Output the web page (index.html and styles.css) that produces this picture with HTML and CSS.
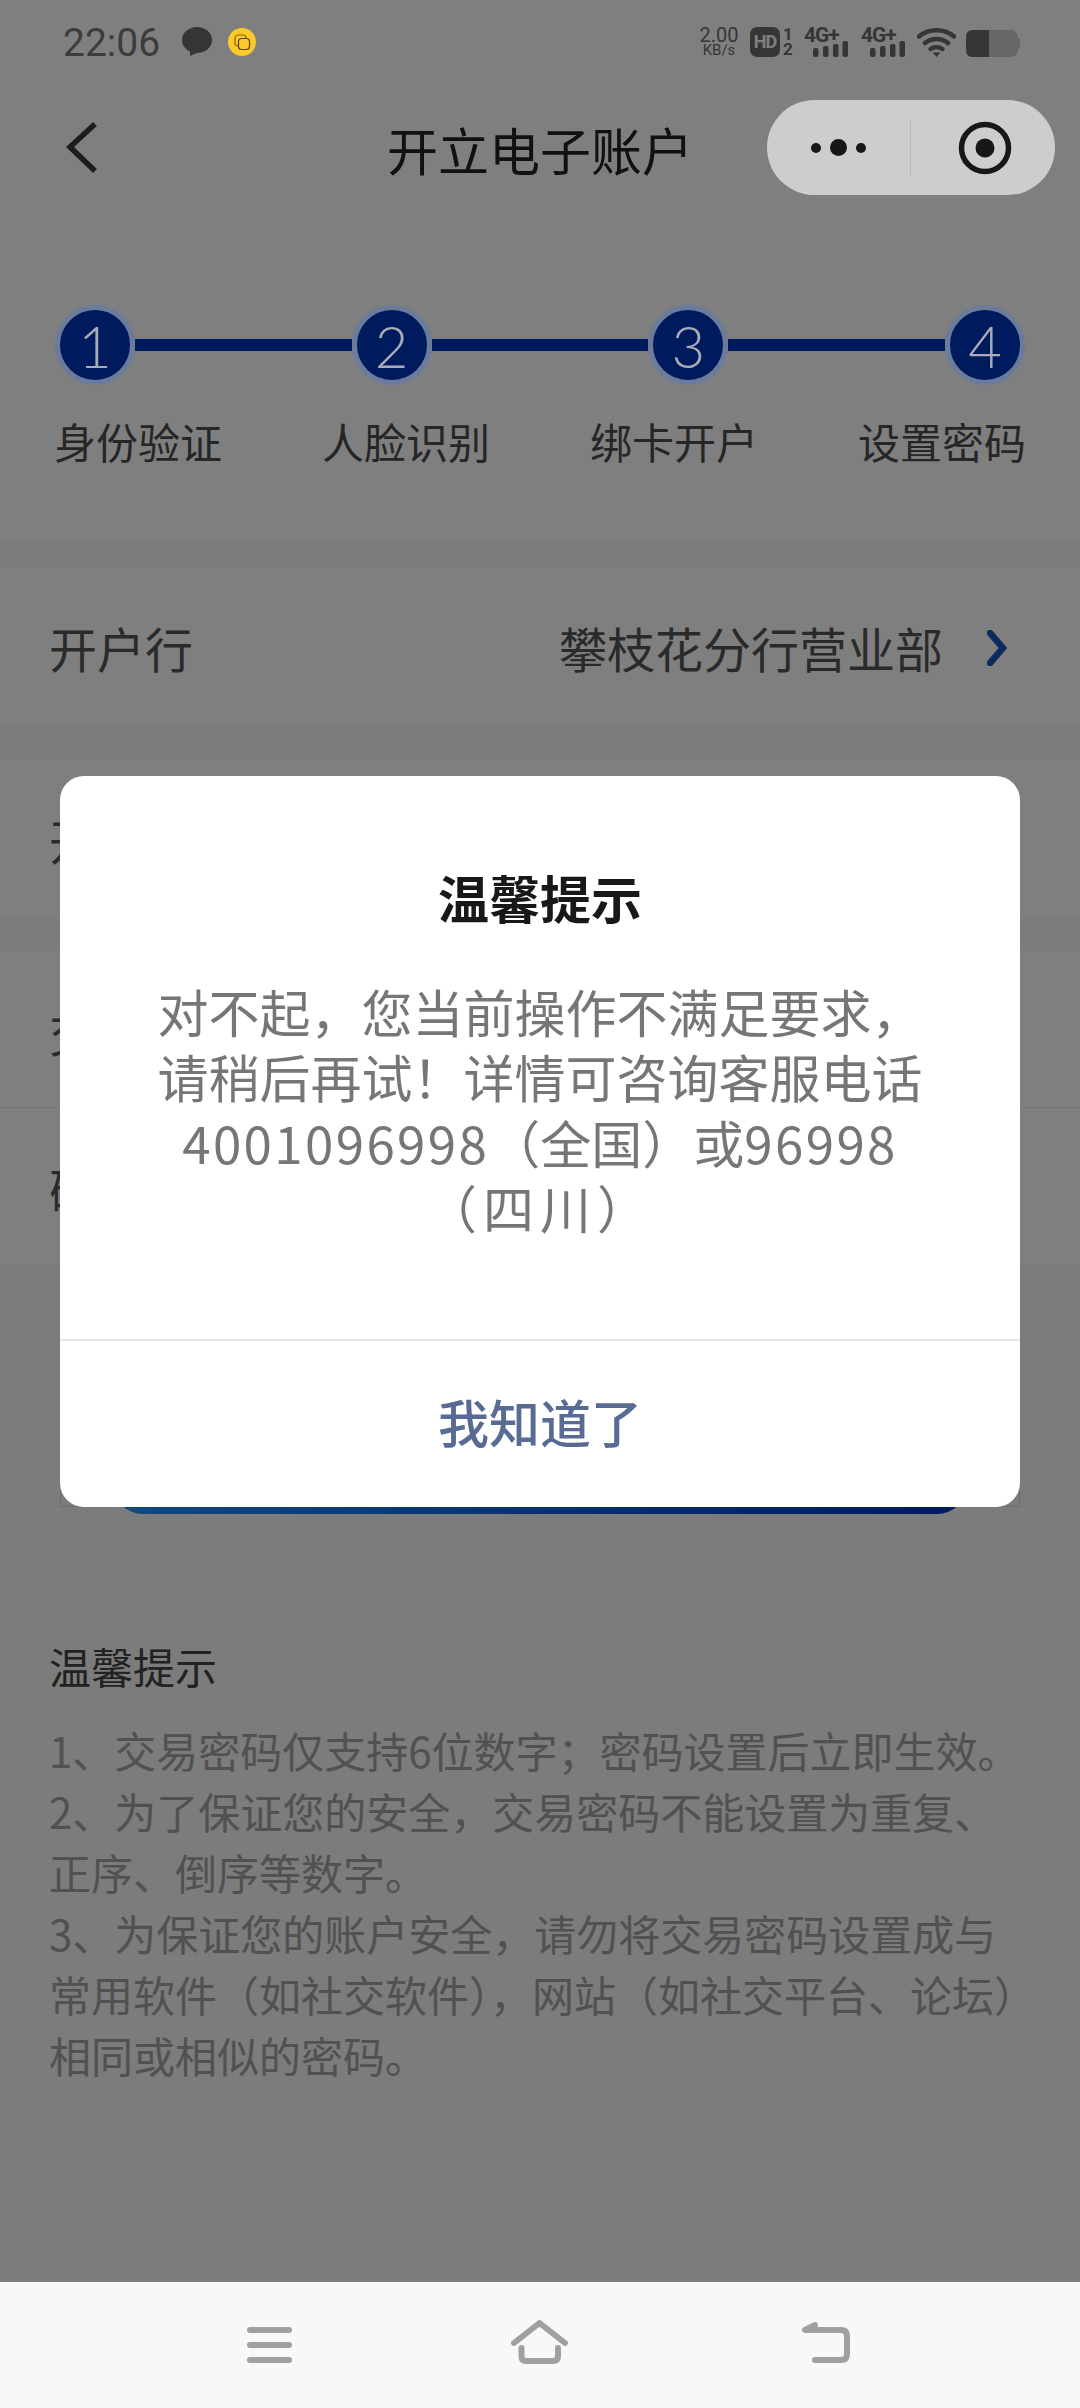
FILE: index.html
```html
<!DOCTYPE html>
<html lang="zh-CN">
    <head>
        <title>开立电子账户</title>
        <link rel="stylesheet" href="styles.css">
    </head>
    <body>
        <div id="screen">
            <div class="status-bar">
                <div class="status-left">
                    <span class="clock">22:06</span>
                    <svg class="bubble" width="30" height="29" viewBox="0 0 30 29"><ellipse cx="15" cy="13" rx="15" ry="13" fill="#6c6c6c"/><path d="M8 22 L8 29 L17 25 Z" fill="#6c6c6c"/></svg>
                    <svg class="over-mask" width="28" height="28" viewBox="0 0 28 28"><circle cx="14" cy="14" r="14" fill="#fcc92b"/><rect x="7" y="7" width="11" height="11" rx="3" fill="none" stroke="#8a6512" stroke-width="1.2"/><rect x="10.500" y="10.500" width="11" height="11" rx="3" fill="#fcc92b" stroke="#5b4208" stroke-width="1.200"/></svg>
                </div>
                <div class="status-right">
                    <div class="speed"><span>2.00</span><span class="speed-unit">KB/s</span></div>
                    <div class="hd">HD</div>
                    <div class="sim"><span>1</span><span>2</span></div>
                    <div class="signal">
                        <span>4G+</span>
                        <svg width="35" height="16" viewBox="0 0 35 16"><rect x="0" y="7" width="5.500" height="9" rx="2"/><rect x="10" y="5" width="5.500" height="11" rx="2"/><rect x="20" y="3" width="5.500" height="13" rx="2"/><rect x="29.500" y="0" width="5.500" height="16" rx="2"/></svg>
                    </div>
                    <div class="signal">
                        <span>4G+</span>
                        <svg width="35" height="16" viewBox="0 0 35 16"><rect x="0" y="7" width="5.500" height="9" rx="2"/><rect x="10" y="5" width="5.500" height="11" rx="2"/><rect x="20" y="3" width="5.500" height="13" rx="2"/><rect x="29.500" y="0" width="5.500" height="16" rx="2"/></svg>
                    </div>
                    <svg class="wifi" width="39" height="30" viewBox="0 0 39 30" fill="none" stroke="#6c6c6c" stroke-width="4.500" stroke-linecap="round"><path d="M2 9.500 C11 1 28 1 37 9.500"/><path d="M8 16 C14 10.500 25 10.500 31 16"/><path d="M13.500 22 C17 19.500 22 19.500 25.500 22"/><path d="M15.500 25.500 H23.500 L19.500 30 Z" fill="#6c6c6c" stroke="none"/></svg>
                    <svg class="battery" width="54" height="27" viewBox="0 0 54 27"><rect width="52" height="27" rx="7" fill="#cecece"/><rect x="52" y="8" width="2" height="11" rx="1" fill="#cecece"/><path d="M7 0 H23 V27 H7 Q0 27 0 20 V7 Q0 0 7 0 Z" fill="#6c6c6c"/></svg>
                </div>
            </div>

            <div class="header">
                <svg class="back" width="34" height="54" viewBox="0 0 34 54" fill="none" stroke="#3a3a3a" stroke-width="5.500"><path d="M30 3 L5 26 L30 50"/></svg>
                <h1 class="page-title">开立电子账户</h1>
            </div>

            <div class="capsule">
                <div class="capsule-more"><i></i><i class="big"></i><i></i></div>
                <div class="capsule-line"></div>
                <svg width="56" height="56" viewBox="0 0 56 56"><circle cx="28" cy="28" r="23.500" fill="none" stroke="#171717" stroke-width="5.500"/><circle cx="28" cy="28" r="9.500" fill="#171717"/></svg>
            </div>

            <div class="steps">
                <div class="step-track">
                    <div class="step-dot">1</div>
                    <div class="step-line"></div>
                    <div class="step-dot">2</div>
                    <div class="step-line"></div>
                    <div class="step-dot">3</div>
                    <div class="step-line"></div>
                    <div class="step-dot">4</div>
                </div>
                <div class="step-labels">
                    <span>身份验证</span>
                    <span>人脸识别</span>
                    <span>绑卡开户</span>
                    <span>设置密码</span>
                </div>
            </div>

            <div class="form-group first">
                <div class="form-row">
                    <span>开户行</span>
                    <span class="row-value">攀枝花分行营业部
                        <svg width="20" height="36" viewBox="0 0 20 36" fill="none" stroke="#1a54c0" stroke-width="6.500" stroke-linecap="round"><path d="M3 3 L16 18 L3 33"/></svg>
                    </span>
                </div>
            </div>
            <div class="form-group">
                <div class="form-row"><span>开户名称</span></div>
            </div>
            <div class="form-group">
                <div class="form-row"><span>交易密码</span></div>
                <div class="form-row divided"><span>确认密码</span></div>
            </div>

            <div class="submit"></div>

            <div class="tips">
                <h2>温馨提示</h2>
                <p>1、交易密码仅支持6位数字；密码设置后立即生效。</p>
                <p>2、为了保证您的安全，交易密码不能设置为重复、正序、倒序等数字。</p>
                <p>3、为保证您的账户安全，请勿将交易密码设置成与常用软件（如社交软件），网站（如社交平台、论坛）相同或相似的密码。</p>
            </div>

            <div class="mask">
                <div class="dialog">
                    <h3 class="dialog-title">温馨提示</h3>
                    <p class="dialog-text">对不起，您当前操作不满足要求，请稍后再试！详情可咨询客服电话<span class="num">4001096998</span>（全国）或<span class="num">96998</span><span class="region">（四川）</span></p>
                    <div class="dialog-btn">我知道了</div>
                </div>
            </div>
        </div>

        <div class="nav-bar">
            <svg width="45" height="36" viewBox="0 0 45 36" fill="#a0a0a0"><rect width="45" height="6" rx="3"/><rect y="15" width="45" height="6" rx="3"/><rect y="30" width="45" height="6" rx="3"/></svg>
            <svg class="nav-home" width="57" height="44" viewBox="0 0 57 44" fill="none" stroke="#a0a0a0" stroke-width="6" stroke-linecap="round" stroke-linejoin="round"><path d="M3 23 L28.500 3 L54 23"/><path d="M10.500 28 V36 Q10.500 41 15 41 H42 Q47 41 47 36 V28"/></svg>
            <svg class="nav-back" width="50" height="42" viewBox="0 0 50 42" fill="none" stroke="#a0a0a0" stroke-width="6" stroke-linecap="round" stroke-linejoin="round"><path d="M14 3 L4 8 H40 Q46 8 46 14 V32 Q46 38 40 38 H14"/></svg>
        </div>
    </body>
</html>
```

FILE: styles.css
```css
* {
    box-sizing: border-box;
}

body {
    margin: 0;
    width: 1080px;
    height: 2408px;
    overflow: hidden;
    background-color: #F7F8F7;
    font-family: "Noto Sans CJK SC", sans-serif;
}

h1, h2, h3, p {
    margin: 0;
    font-weight: normal;
}

#screen {
    position: relative;
    height: 2282px;
}

.mask {
    position: absolute;
    top: 0;
    right: 0;
    bottom: 0;
    left: 0;
    z-index: 10;
    display: flex;
    align-items: center;
    justify-content: center;
    background-color: rgba(0, 0, 0, 0.5);
}

/* status bar */
.status-bar {
    display: flex;
    justify-content: space-between;
    height: 100px;
    padding: 27px 60px 0 63px;
    background-color: #FFF;
}
.status-left {
    display: flex;
    align-items: flex-start;
}
.clock {
    font-family: Roboto, sans-serif;
    font-size: 39px;
    line-height: 32px;
    color: #787878;
}
.bubble {
    margin-left: 22px;
}
.over-mask {
    position: relative;
    z-index: 11;
    margin-left: 16px;
    margin-top: 1px;
}
.status-right {
    display: flex;
    align-items: flex-start;
    color: #6c6c6c;
    font-family: Roboto, sans-serif;
}
.speed {
    display: flex;
    flex-direction: column;
    align-items: center;
    width: 38px;
    font-size: 20px;
    line-height: 17px;
}
.speed-unit {
    font-size: 15px;
    line-height: 13px;
}
.hd {
    width: 30px;
    height: 30px;
    margin-left: 12px;
    border-radius: 7px;
    background-color: #6c6c6c;
    color: #FFF;
    font-size: 18px;
    font-weight: bold;
    letter-spacing: -1px;
    line-height: 30px;
    text-align: center;
}
.sim {
    display: flex;
    flex-direction: column;
    align-items: center;
    width: 12px;
    margin-left: 2px;
    font-size: 17px;
    font-weight: bold;
    line-height: 15px;
}
.signal {
    display: flex;
    flex-direction: column;
    width: 44px;
    margin-left: 10px;
    font-size: 21px;
    font-weight: bold;
    letter-spacing: -1px;
    line-height: 17px;
}
.signal + .signal {
    margin-left: 13px;
}
.signal svg {
    align-self: flex-end;
    margin-top: -3px;
    fill: #6c6c6c;
}
.wifi {
    margin-left: 12px;
}
.battery {
    margin-top: 3px;
    margin-left: 10px;
}

/* title bar */
.header {
    display: grid;
    grid-template-columns: 1fr auto 1fr;
    align-items: center;
    height: 100px;
    background-color: #FFF;
}
.back {
    margin-left: 65px;
    margin-top: -4px;
}
.page-title {
    margin-top: -3px;
    font-size: 51px;
    line-height: 100px;
    color: #222;
}
.capsule {
    position: absolute;
    top: 100px;
    left: 767px;
    z-index: 11;
    display: flex;
    align-items: center;
    width: 288px;
    height: 95px;
    border-radius: 48px;
    background-color: #CDCDCD;
}
.capsule-more {
    display: flex;
    align-items: center;
    gap: 9px;
    margin-left: 44px;
}
.capsule-more i {
    width: 10px;
    height: 10px;
    border-radius: 50%;
    background-color: #171717;
}
.capsule-more i.big {
    width: 17px;
    height: 17px;
}
.capsule-line {
    width: 1px;
    height: 56px;
    margin: 0 46px 0 44px;
    background-color: #BDBDBD;
}

/* steps */
.steps {
    height: 340px;
    padding-top: 105px;
    background-color: #FFF;
}
.step-track {
    display: flex;
    align-items: center;
    padding: 0 55px;
}
/* the dots sit above the mask, their digit and ring are lighter than it allows */
.step-dot {
    position: relative;
    z-index: 11;
    display: flex;
    align-items: center;
    justify-content: center;
    flex: none;
    width: 80px;
    height: 80px;
    border: 5px solid #6B7B9B;
    border-radius: 50%;
    background-color: #001A5E;
    font-family: Lato, sans-serif;
    font-size: 58px;
    font-weight: 300;
    color: #A8ACB6;
}
.step-line {
    flex: 1;
    height: 12px;
    background-color: #0034BC;
}
.step-labels {
    display: flex;
    justify-content: space-between;
    margin-top: 26px;
    padding: 0 54px;
    font-size: 42px;
    line-height: 60px;
    color: #4C4C4C;
}

/* form rows */
.form-group {
    margin-top: 36px;
    background-color: #FFF;
}
.form-group.first {
    margin-top: 27px;
}
.form-row {
    display: flex;
    justify-content: space-between;
    align-items: center;
    height: 156px;
    padding: 3px 0 0 49px;
    font-size: 48px;
    color: #555;
}
.form-row.divided {
    height: 157px;
    border-top: 1px solid #E8E8E8;
}
.row-value {
    display: flex;
    align-items: center;
    gap: 44px;
    padding-right: 73px;
}
.row-value svg {
    margin-top: 3px;
}

/* submit button, mostly behind the dialog */
.submit {
    width: 854px;
    height: 120px;
    margin: 130px auto 0;
    border-radius: 30px;
    background: linear-gradient(90deg, #1E94FF, #0034BC);
}

/* tips */
.tips {
    margin-top: 121px;
    padding: 0 48px 0 49px;
    font-size: 42px;
    line-height: 61px;
    color: #A2A2A2;
}
.tips h2 {
    margin-bottom: 23px;
    font-size: 42px;
    color: #444;
}

/* dialog */
.dialog {
    position: relative;
    width: 960px;
    border-radius: 24px;
    background-color: #FFF;
    text-align: center;
}
.dialog::before {
    content: "";
    position: absolute;
    right: 0;
    bottom: 0;
    left: 0;
    z-index: -1;
    height: 30px;
    border: 1px solid #6E6E6E;
    border-top: 0;
}
.dialog-title {
    padding-top: 86px;
    font-size: 51px;
    font-weight: bold;
    line-height: 70px;
    color: #181818;
}
.dialog-text {
    padding: 47px 96px 98px;
    font-size: 51px;
    line-height: 65.500px;
    color: #767676;
    text-spacing-trim: space-all;
}
.num {
    letter-spacing: 2.400px;
}
.region {
    letter-spacing: 6px;
}
.dialog-btn {
    height: 168px;
    border-top: 2px solid #E5E5E5;
    font-size: 51px;
    font-weight: 500;
    line-height: 160px;
    color: #576B95;
}

/* android nav bar */
.nav-bar {
    display: flex;
    align-items: flex-start;
    height: 126px;
    padding: 45px 0 0 247px;
    background-color: #F7F8F8;
}
.nav-home {
    margin-top: -7px;
    margin-left: 219px;
}
.nav-back {
    margin-top: -5px;
    margin-left: 233px;
}
```
